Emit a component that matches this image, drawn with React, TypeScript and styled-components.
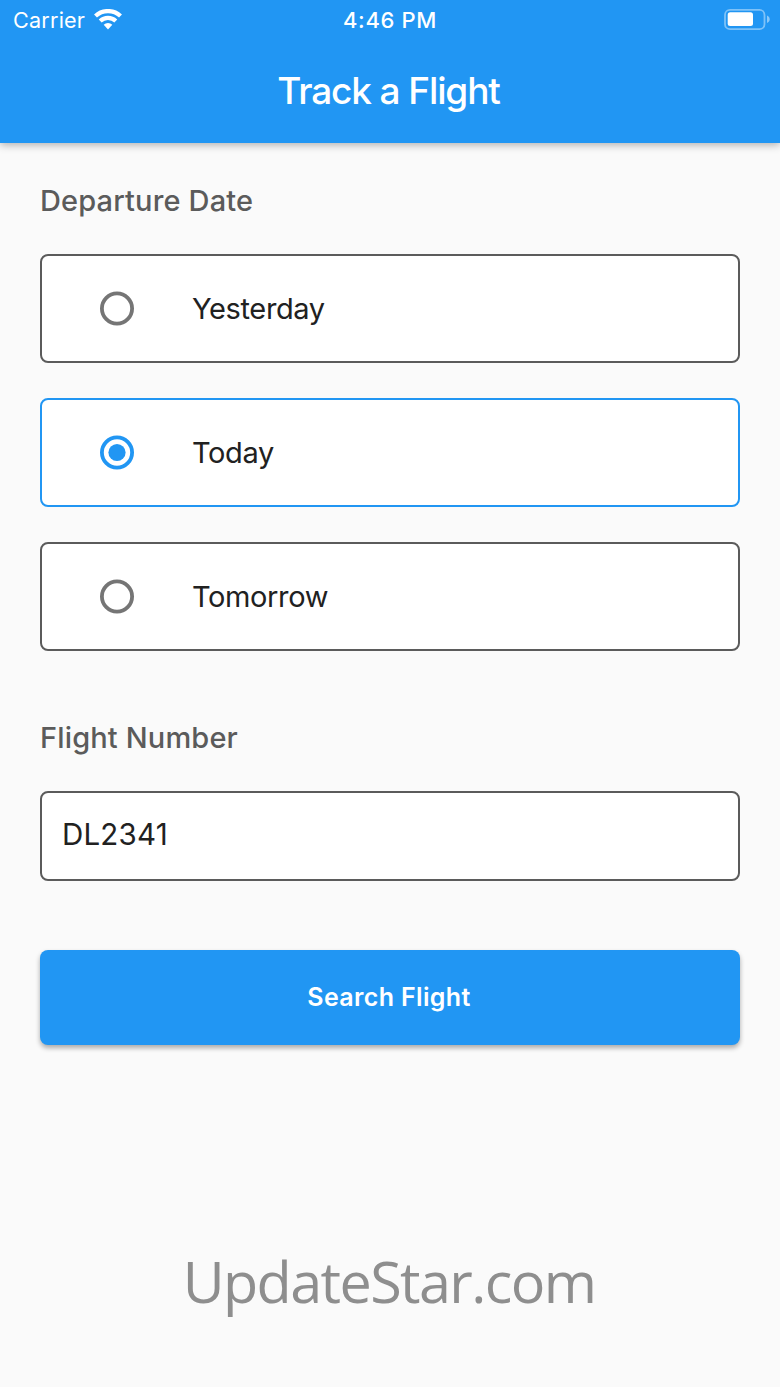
import React, { useState } from "react";
import styled, { createGlobalStyle } from "styled-components";

const blue = "#2196f3";

const GlobalStyle = createGlobalStyle`
  * { box-sizing: border-box; }
  body { margin: 0; background: #fafafa; font-family: Inter, "Liberation Sans", sans-serif; }
`;

const Screen = styled.div`
  height: 1387px;
  display: flex;
  flex-direction: column;
  background: #fafafa;
  overflow: hidden;
`;

const Header = styled.header`
  height: 143px;
  flex: none;
  background: ${blue};
  color: #fff;
  box-shadow: 0 2px 8px rgba(0, 0, 0, 0.3);
`;

const StatusBar = styled.div`
  height: 40px;
  padding: 0 10px 0 13px;
  display: grid;
  grid-template-columns: 1fr auto 1fr;
  align-items: center;
`;

const Carrier = styled.div`
  display: flex;
  align-items: center;
  gap: 9px;
  font-size: 21.6px;
  line-height: 40px;
  letter-spacing: 0.2px;
`;

const Clock = styled.div`
  font-size: 22px;
  font-weight: 500;
  line-height: 40px;
  letter-spacing: 0.65px;
  margin-right: 3px;
`;

const BatterySlot = styled.div`
  display: flex;
  justify-content: flex-end;
`;

const Title = styled.h1`
  margin: 0;
  font-size: 37px;
  font-weight: 500;
  line-height: 102px;
  text-align: center;
  letter-spacing: -1.12px;
  padding-right: 3px;
`;

const Form = styled.form`
  padding: 36px 40px 0;
  display: flex;
  flex-direction: column;
`;

const FieldLabel = styled.div`
  height: 44px;
  line-height: 44px;
  font-size: 29px;
  font-weight: 500;
  color: #5b5b5b;
  letter-spacing: 0.15px;
`;

const Options = styled.div`
  margin: 31px 0 65px;
  display: flex;
  flex-direction: column;
  gap: 35px;
`;

const Option = styled.label<{ $selected: boolean }>`
  height: 109px;
  padding-left: 58px;
  display: flex;
  align-items: center;
  gap: 58px;
  background: #fff;
  border: 2px solid ${(p) => (p.$selected ? blue : "#5b5b5b")};
  border-radius: 8px;
  font-size: 29px;
  letter-spacing: -0.38px;
  color: #212121;
`;

const HiddenRadio = styled.input`
  appearance: none;
  width: 0;
  height: 0;
  margin: 0 -58px 0 0;
`;

const FlightInput = styled.input`
  height: 90px;
  margin: 31px 0 69px;
  padding: 0 20px 5px;
  background: #fff;
  border: 2px solid #5b5b5b;
  border-radius: 8px;
  outline: none;
  font: 400 29.5px Inter, "Liberation Sans", sans-serif;
  letter-spacing: 0.2px;
  color: #212121;
`;

const SearchButton = styled.button`
  height: 95px;
  padding: 0 2px 1px 0;
  border: 0;
  border-radius: 8px;
  background: ${blue};
  color: #fff;
  font: 600 25px Inter, "Liberation Sans", sans-serif;
  letter-spacing: 0.35px;
  box-shadow: 0 3px 5px rgba(0, 0, 0, 0.32);
`;

const Watermark = styled.footer`
  margin-top: 196px;
  padding-right: 2px;
  text-align: center;
  font-family: "Open Sans", "Noto Sans", sans-serif;
  font-size: 57.5px;
  line-height: 80px;
  letter-spacing: -1.6px;
  color: #8e8e8e;
`;

const RadioMark = ({ on }: { on: boolean }) => (
  <svg width="34" height="35" viewBox="0 0 34 35">
    <circle cx="17" cy="17.5" r="15.1" fill="none" stroke={on ? blue : "#757575"} strokeWidth="3.8" />
    {on && <circle cx="17" cy="17.5" r="8.6" fill={blue} />}
  </svg>
);

const WifiIcon = () => (
  <svg width="29" height="23" viewBox="0 0 29 23" fill="none" stroke="#fff">
    <path d="M1.5 7A18.35 18.35 0 0 1 26.5 7" strokeWidth="4.3" />
    <path d="M6.2 12.05A11.4 11.4 0 0 1 21.8 12.05" strokeWidth="4.2" />
    <path d="M9.7 15.8A6.3 6.3 0 0 1 18.3 15.8L14 20.4Z" fill="#fff" stroke="none" />
  </svg>
);

const BatteryIcon = () => (
  <svg width="46" height="22" viewBox="0 0 46 22">
    <rect x="1" y="0.9" width="39.5" height="19.3" rx="5" fill="none" stroke="#fff" strokeOpacity="0.42" strokeWidth="1.8" />
    <rect x="3.7" y="3.2" width="25.3" height="13.8" rx="2.5" fill="#fff" />
    <path d="M43 6.5c3.6 1.3 3.6 6.1 0 7.4Z" fill="#fff" fillOpacity="0.48" />
  </svg>
);

const days = ["Yesterday", "Today", "Tomorrow"];

export default function App() {
  const [day, setDay] = useState("Today");
  const [flight, setFlight] = useState("DL2341");
  return (
    <Screen>
      <GlobalStyle />
      <Header>
        <StatusBar>
          <Carrier>
            Carrier
            <WifiIcon />
          </Carrier>
          <Clock>4:46 PM</Clock>
          <BatterySlot>
            <BatteryIcon />
          </BatterySlot>
        </StatusBar>
        <Title>Track a Flight</Title>
      </Header>
      <Form onSubmit={(e) => e.preventDefault()}>
        <FieldLabel>Departure Date</FieldLabel>
        <Options>
          {days.map((d) => (
            <Option key={d} $selected={d === day}>
              <HiddenRadio type="radio" name="day" checked={d === day} onChange={() => setDay(d)} />
              <RadioMark on={d === day} />
              {d}
            </Option>
          ))}
        </Options>
        <FieldLabel>Flight Number</FieldLabel>
        <FlightInput value={flight} onChange={(e) => setFlight(e.target.value)} />
        <SearchButton type="submit">Search Flight</SearchButton>
      </Form>
      <Watermark>UpdateStar.com</Watermark>
    </Screen>
  );
}
